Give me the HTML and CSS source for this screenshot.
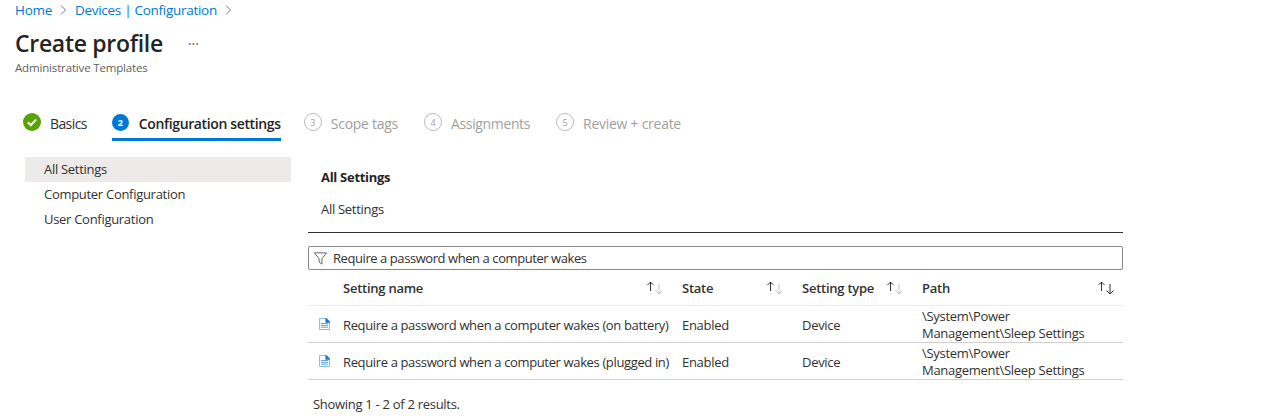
FILE: index.html
```html
<!DOCTYPE html>
<html lang="en">
<head>
<meta charset="utf-8">
<title>Create profile</title>
<link rel="stylesheet" href="styles.css">
</head>
<body>
<nav class="crumbs">
  <a>Home</a>
  <svg class="chev" viewBox="0 0 8 12"><path d="M2 1.5 6.5 6 2 10.5"/></svg>
  <a>Devices | Configuration</a>
  <svg class="chev" viewBox="0 0 8 12"><path d="M2 1.5 6.5 6 2 10.5"/></svg>
</nav>
<header class="head">
  <div class="title-row"><h1>Create profile</h1><span class="more">···</span></div>
  <p class="subtitle">Administrative Templates</p>
</header>
<div class="steps">
  <div class="step step-done">
    <svg class="check" viewBox="0 0 18 18"><circle cx="9" cy="9" r="9" fill="#57a300"/><path d="M4.8 9.2 7.8 12.2 13.2 6.4" fill="none" stroke="#fff" stroke-width="2"/></svg>
    <span class="label">Basics</span>
  </div>
  <div class="step step-current"><span class="num">2</span><span class="label">Configuration settings</span></div>
  <div class="step step-todo s3"><span class="num">3</span><span class="label">Scope tags</span></div>
  <div class="step step-todo s4"><span class="num">4</span><span class="label">Assignments</span></div>
  <div class="step step-todo s5"><span class="num">5</span><span class="label">Review + create</span></div>
</div>
<div class="main">
  <aside class="side">
    <div class="side-item selected">All Settings</div>
    <div class="side-item">Computer Configuration</div>
    <div class="side-item">User Configuration</div>
  </aside>
  <section class="content">
    <h2>All Settings</h2>
    <p class="crumb-text">All Settings</p>
    <div class="filter">
      <svg class="funnel" viewBox="0 0 16 16"><path d="M1.5 2h13L9.5 8.2V14L6.5 11.8V8.2z"/></svg>
      <span class="long">Require a password when a computer wakes</span>
    </div>
    <div class="grid">
      <div class="row row-head">
        <div></div>
        <div class="hcell"><span>Setting name</span><svg class="sort" viewBox="0 0 17 14"><path class="up" d="M3.5 10V1M.5 4 3.5 1 6.5 4"/><path class="dim" d="M12 3V13M8.5 9.5 12 13 15.5 9.5"/></svg></div>
        <div class="hcell"><span>State</span><svg class="sort" viewBox="0 0 17 14"><path class="up" d="M3.5 10V1M.5 4 3.5 1 6.5 4"/><path class="dim" d="M12 3V13M8.5 9.5 12 13 15.5 9.5"/></svg></div>
        <div class="hcell"><span>Setting type</span><svg class="sort" viewBox="0 0 17 14"><path class="up" d="M3.5 10V1M.5 4 3.5 1 6.5 4"/><path class="dim" d="M12 3V13M8.5 9.5 12 13 15.5 9.5"/></svg></div>
        <div class="hcell hcell-last"><span>Path</span><svg class="sort" viewBox="0 0 17 14"><path class="up" d="M3.5 10V1M.5 4 3.5 1 6.5 4"/><path class="up" d="M12 3V13M8.5 9.5 12 13 15.5 9.5"/></svg></div>
      </div>
      <div class="row">
        <div class="ic"><svg class="doc" viewBox="0 0 12 13"><path d="M.5.5H7.5L11.5 4.5V12.5H.5z" fill="#fff" stroke="#7fb4e6"/><path d="M7 0h1l4 4v1H7z" fill="#0f78d4"/><path d="M2 6h8M2 8h8M2 10h8" stroke="#4b9ce3"/></svg></div>
        <div class="name">Require a password when a computer wakes (on battery)</div>
        <div>Enabled</div>
        <div>Device</div>
        <div class="path">\System\Power Management\Sleep Settings</div>
      </div>
      <div class="row">
        <div class="ic"><svg class="doc" viewBox="0 0 12 13"><path d="M.5.5H7.5L11.5 4.5V12.5H.5z" fill="#fff" stroke="#7fb4e6"/><path d="M7 0h1l4 4v1H7z" fill="#0f78d4"/><path d="M2 6h8M2 8h8M2 10h8" stroke="#4b9ce3"/></svg></div>
        <div class="name">Require a password when a computer wakes (plugged in)</div>
        <div>Enabled</div>
        <div>Device</div>
        <div class="path">\System\Power Management\Sleep Settings</div>
      </div>
    </div>
    <p class="count">Showing 1 - 2 of 2 results.</p>
  </section>
</div>
</body>
</html>
```
FILE: styles.css
```css
* { box-sizing: border-box; }
html, body { margin: 0; padding: 0; height: 416px; overflow: hidden; }
body { background: #fff; color: #323130; font: 13px/17px "Open Sans", "Noto Sans", sans-serif; letter-spacing: -0.29px; }
.crumbs { display: flex; align-items: center; height: 20px; padding-left: 15px; color: #0078d4; font-size: 13.5px; }
.chev { width: 8px; height: 12px; margin: 0 8px 0 7px; fill: none; stroke: #777; stroke-width: 1; }
.head { padding-left: 15px; margin-top: 8px; }
.title-row { display: flex; align-items: center; height: 30px; }
h1 { margin: 0; font-size: 23px; font-weight: 600; line-height: 30px; color: #252423; letter-spacing: -0.3px; }
.more { margin-left: 25px; color: #605e5c; font-size: 14px; letter-spacing: 0; }
.subtitle { margin: 2px 0 0; font-size: 11.5px; line-height: 16px; color: #605e5c; letter-spacing: -0.16px; }
.steps { display: flex; height: 30px; margin: 35px 0 0 23px; align-items: flex-start; }
.step { display: flex; align-items: center; height: 30px; padding-bottom: 8px; gap: 9px; font-size: 14px; letter-spacing: -0.27px; }
.label { padding-top: 2px; }
.step-done { margin-right: 25px; letter-spacing: -0.6px; }
.check { width: 18px; height: 18px; }
.step-current { border-bottom: 3px solid #0078d4; padding-bottom: 5px; font-weight: 600; gap: 10px; color: #252423; width: 169px; white-space: nowrap; letter-spacing: -0.37px; }
.num { display: inline-flex; align-items: center; justify-content: center; width: 17px; height: 17px; border-radius: 50%; font-size: 9px; letter-spacing: 0; }
.step-current .num { background: #0078d4; color: #fff; font-weight: 700; }
.step-todo { color: #a19f9d; }
.step-todo .num { border: 1px solid #bdbbb9; width: 18px; height: 18px; }
.s3 { margin-left: 23px; }
.s4 { margin-left: 26px; letter-spacing: -0.36px; }
.s5 { margin-left: 26px; }
.main { display: flex; margin-top: 16px; }
.side { width: 266px; margin-left: 25px; flex: none; }
.side-item { height: 25px; line-height: 25px; padding-left: 19px; }
.selected { background: #edebe9; }
.content { width: 815px; margin-left: 17px; }
h2 { margin: 12px 0 0 13px; font-size: 13px; line-height: 17px; font-weight: 700; color: #252423; }
.crumb-text { margin: 15px 0 0; padding: 0 0 14px 13px; border-bottom: 1px solid #323130; }
.filter { display: flex; align-items: center; height: 24px; margin-top: 13px; padding-left: 4px; border: 1px solid #8a8886; border-radius: 2px; gap: 5px; }
.long { letter-spacing: -0.43px; white-space: nowrap; }
.name { letter-spacing: -0.36px; white-space: nowrap; }
.funnel { width: 15px; height: 15px; fill: none; stroke: #605e5c; stroke-width: 1; }
.row { display: grid; grid-template-columns: 35px 339px 120px 120px 1fr; align-items: center; height: 37px; padding-top: 2px; border-bottom: 1px solid #d2d0ce; }
.row-head { height: 36px; border-bottom-color: #edebe9; font-weight: 600; color: #323130; padding-top: 1px; letter-spacing: -0.25px; }
.hcell { display: flex; justify-content: space-between; align-items: center; padding-right: 18px; }
.hcell-last { padding-right: 8px; }
.sort { width: 17px; height: 14px; fill: none; stroke-width: 1; }
.up { stroke: #323130; }
.dim { stroke: #c8c6c4; }
.ic { display: flex; padding-left: 11px; }
.doc { width: 11px; height: 12px; margin-top: -3px; }
.path { padding-right: 30px; }
.count { margin: 16px 0 0 5px; }
```
